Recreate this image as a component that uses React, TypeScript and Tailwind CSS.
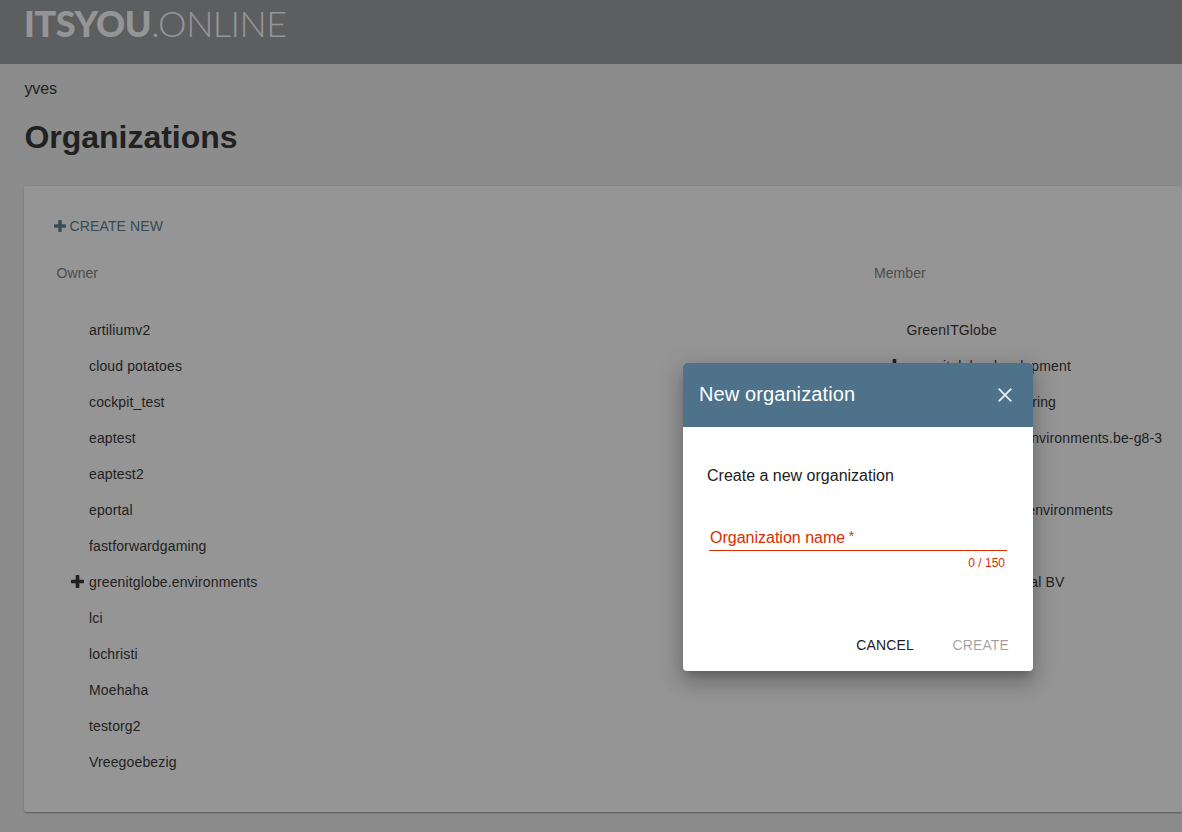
import React from "react";

type Org = { name: string; expandable?: boolean; indent?: string };

const owned: Org[] = [
  { name: "artiliumv2" },
  { name: "cloud potatoes" },
  { name: "cockpit_test" },
  { name: "eaptest" },
  { name: "eaptest2" },
  { name: "eportal" },
  { name: "fastforwardgaming" },
  { name: "greenitglobe.environments", expandable: true },
  { name: "lci" },
  { name: "lochristi" },
  { name: "Moehaha" },
  { name: "testorg2" },
  { name: "Vreegoebezig" },
];

const member: Org[] = [
  { name: "GreenITGlobe" },
  { name: "greenitglobe.development", expandable: true },
  { name: "greenitglobe.monitoring" },
  { name: "greenitglobe.environments.be-g8-3", indent: "w-[34px]" },
  { name: "gig" },
  { name: "greenitglobe.environments", indent: "w-[38px]" },
  { name: "itsyou" },
  { name: "Incubaid International BV", indent: "-mr-[2px]" },
];

function Plus({ className }: { className: string }) {
  return (
    <svg viewBox="0 0 12 12" className={className} fill="currentColor" aria-hidden="true">
      <path d="M5.100 0h1.800q.8 0 .8.8v3.500h3.500q.8 0 .8.8v1.800q0 .8-.8.8H7.700v3.500q0 .8-.8.8H5.100q-.8 0-.8-.8V7.700H.8q-.8 0-.8-.8V5.100q0-.8.8-.8h3.500V.8q0-.8.8-.8z" />
    </svg>
  );
}

function OrgColumn({ title, items }: { title: string; items: Org[] }) {
  return (
    <section className="w-[817.500px] shrink-0">
      <h2 className="pl-[2.500px] leading-5 tracking-[0.005em] text-[#757575]">{title}</h2>
      <ul className="mt-[29px]">
        {items.map((o) => (
          <li key={o.name} className="flex h-9 items-center whitespace-nowrap">
            {o.indent ? <span className={"shrink-0 " + o.indent} /> : null}
            <span className="flex w-[35px] shrink-0 justify-end pr-[5.500px] pb-[2px]">
              {o.expandable ? <Plus className="size-[13px]" /> : null}
            </span>
            <span>{o.name}</span>
          </li>
        ))}
      </ul>
    </section>
  );
}

export default function App() {
  return (
    <div className="relative h-[832px] w-full overflow-hidden bg-[#eee] font-['Liberation_Sans',Arial,sans-serif] text-sm tracking-[0.01em] text-[#212121]">
      <header className="flex h-16 bg-[#949698] pl-[24px] text-white">
        <div className="flex h-[46px] items-center font-[Lato,sans-serif] text-[36px] leading-none tracking-[-0.013em]">
          <span className="font-black">ITSYOU</span>
          <span className="font-light">.ONLINE</span>
        </div>
      </header>
      <main className="pt-[15px] pl-6">
        <p className="pl-[0.500px] text-base leading-5 tracking-[-0.01em]">yves</p>
        <h1 className="mt-[19px] pl-[0.500px] text-[32px] leading-[38px] font-bold tracking-[-0.001em]">Organizations</h1>
        <div className="mt-[30px] h-[626px] rounded-l-[2px] bg-white pt-[30px] pl-[30px] shadow-[0_1px_3px_0_rgba(0,0,0,0.2),0_1px_1px_0_rgba(0,0,0,0.14),0_2px_1px_-1px_rgba(0,0,0,0.12)]">
          <button className="flex h-5 items-center gap-[3.500px] tracking-[0.01em] text-[#4d7289]">
            <Plus className="size-3" />
            <span>CREATE NEW</span>
          </button>
          <div className="mt-[27px] flex">
            <OrgColumn title="Owner" items={owned} />
            <OrgColumn title="Member" items={member} />
          </div>
        </div>
      </main>

      <div className="absolute inset-0 bg-[#212121]/48" />

      <div
        role="dialog"
        className="absolute top-[363px] left-[683px] flex h-[308px] w-[350px] flex-col overflow-hidden rounded-[4px] bg-white shadow-[0_7px_8px_-4px_rgba(0,0,0,0.2),0_13px_19px_2px_rgba(0,0,0,0.14),0_5px_24px_4px_rgba(0,0,0,0.12)]"
      >
        <div className="flex h-16 shrink-0 items-center justify-between bg-[#4d7289] pr-[21px] pl-4 text-white">
          <h2 className="pb-0.5 text-xl leading-6 tracking-[0.005em]">New organization</h2>
          <svg viewBox="0 0 14 14" className="size-[14px] text-white/87" fill="none" stroke="currentColor" strokeWidth="1.900" aria-label="Close">
            <path d="M.7.700l12.600 12.600M13.300.7.700 13.300" />
          </svg>
        </div>
        <div className="flex-1 px-6 pt-[39px]">
          <p className="text-base leading-5 tracking-normal">Create a new organization</p>
          <div className="mx-[2px] mt-[37px] w-[298px] text-[#dd2c00]">
            <label className="flex h-7 items-start border-b border-[#dd2c00] pt-1 pl-px text-base leading-[22px] tracking-normal">
              Organization name<span className="pl-[3.500px] text-[14px] leading-[19px]">*</span>
            </label>
            <p className="pt-1 pr-[2px] text-right text-xs leading-4 tracking-normal">0 / 150</p>
          </div>
        </div>
        <div className="flex h-[52px] shrink-0 justify-end gap-[38.500px] pr-6">
          <button className="h-[52px]">CANCEL</button>
          <button className="h-[52px] text-black/38">CREATE</button>
        </div>
      </div>
    </div>
  );
}
